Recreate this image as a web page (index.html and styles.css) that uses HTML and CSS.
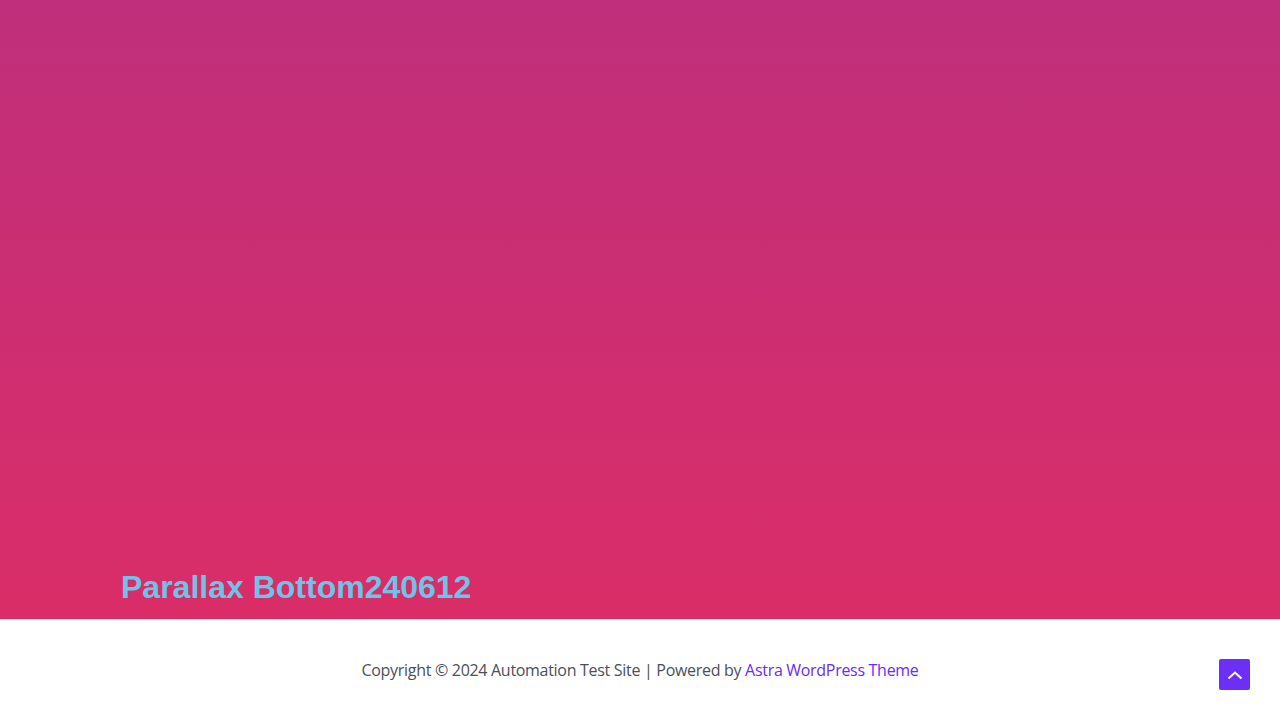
FILE: index.html
```html
<!DOCTYPE html>
<html lang="en">
<head>
<meta charset="utf-8">
<title>Parallax Bottom</title>
<link rel="stylesheet" href="styles.css">
</head>
<body>
<section class="hero">
  <div class="hero-inner">
    <h2 class="hero-title">Parallax Bottom240612</h2>
  </div>
</section>
<footer class="site-footer">
  <p class="copyright">Copyright © 2024 Automation Test Site | Powered by <a href="#" class="theme-link">Astra WordPress Theme</a></p>
</footer>
<a href="#" class="scroll-top" aria-label="Scroll to top">
  <svg width="16" height="10" viewBox="0 0 16 10"><path d="M1.5 8.5 L8 2.5 L14.5 8.5" fill="none" stroke="#fff" stroke-width="2"/></svg>
</a>
</body>
</html>
```

FILE: styles.css
```css
html, body {
  margin: 0;
  padding: 0;
}
body {
  width: 1280px;
  height: 720px;
  overflow: hidden;
  font-family: "Open Sans", "Noto Sans", sans-serif;
}
.hero {
  height: 619px;
  background: linear-gradient(180deg, #bf2f7b 0%, #da2d68 100%);
  display: flex;
  flex-direction: column;
  justify-content: flex-end;
}
.hero-inner {
  padding: 0 121px 12px;
}
.hero-title {
  margin: 0;
  font-family: "Liberation Sans", Arial, sans-serif;
  font-weight: 700;
  font-size: 32px;
  line-height: 40px;
  color: #70c3e5;
}
.site-footer {
  height: 101px;
  background: #fff;
  border-top: 1px solid #ece8f5;
  box-sizing: border-box;
  display: flex;
  justify-content: center;
  padding-top: 38px;
}
.copyright {
  margin: 0;
  font-size: 16px;
  line-height: 24px;
  color: #4b4f58;
  letter-spacing: -0.3px;
}
.theme-link {
  color: #6b2cf5;
  text-decoration: none;
}
.scroll-top {
  position: fixed;
  left: 1219px;
  top: 659px;
  width: 31px;
  height: 31px;
  background: #6b2ff5;
  border-radius: 2px;
  display: flex;
  align-items: center;
  justify-content: center;
}
```
